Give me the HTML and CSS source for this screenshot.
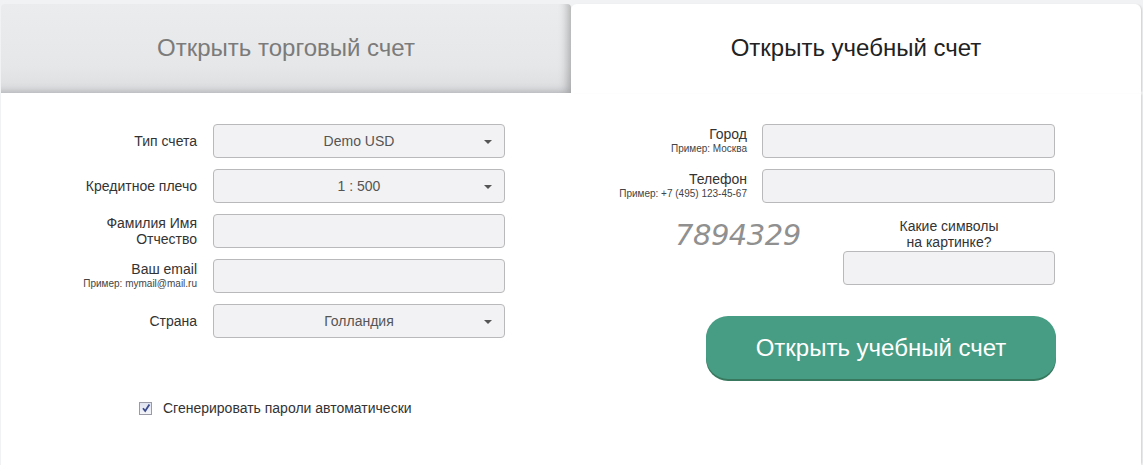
FILE: index.html
```html
<!DOCTYPE html>
<html lang="ru">
<head>
<meta charset="utf-8">
<link rel="stylesheet" href="styles.css">
</head>
<body>
<div class="wrap">
  <div class="tabs">
    <div class="tab tab-off">Открыть торговый счет</div>
    <div class="tab tab-on">Открыть учебный счет</div>
  </div>
  <div class="panel">
    <div class="col col-left">
      <div class="grid grid-left">
        <div class="lbl">Тип счета</div>
        <div class="field select"><span>Demo USD</span><i class="caret"></i></div>
        <div class="lbl">Кредитное плечо</div>
        <div class="field select"><span>1 : 500</span><i class="caret"></i></div>
        <div class="lbl">Фамилия Имя<br>Отчество</div>
        <div class="field"></div>
        <div class="lbl">Ваш email<small>Пример: mymail@mail.ru</small></div>
        <div class="field"></div>
        <div class="lbl">Страна</div>
        <div class="field select"><span>Голландия</span><i class="caret"></i></div>
      </div>
      <label class="check">
        <span class="box"><svg width="10" height="10" viewBox="0 0 10 10"><path d="M2 5.2 L4.2 8 L8.4 1.6" fill="none" stroke="#3b4a8a" stroke-width="1.8"/></svg></span>
        Сгенерировать пароли автоматически
      </label>
    </div>
    <div class="col col-right">
      <div class="grid grid-right">
        <div class="lbl">Город<small>Пример: Москва</small></div>
        <div class="field"></div>
        <div class="lbl">Телефон<small>Пример: +7 (495) 123-45-67</small></div>
        <div class="field"></div>
      </div>
      <div class="captcha">
        <div class="captcha-img">7894329</div>
        <div class="captcha-ask">
          <div class="ask">Какие символы<br>на картинке?</div>
          <div class="field"></div>
        </div>
      </div>
      <button class="submit">Открыть учебный счет</button>
    </div>
  </div>
</div>
</body>
</html>
```
FILE: styles.css
```css
* { box-sizing: border-box; }
html, body { margin: 0; padding: 0; }
body {
  background: #f1f2f3;
  font-family: "Liberation Sans", Arial, sans-serif;
  color: #333;
  width: 1143px;
  height: 465px;
  overflow: hidden;
}
.wrap {
  padding-top: 4px;
  margin-left: 1px;
  width: 1140px;
}
.tabs {
  display: flex;
  height: 89px;
}
.tab {
  display: flex;
  align-items: center;
  justify-content: center;
  font-size: 24px;
  padding-bottom: 1px;
}
.tab-off {
  width: 570px;
  background: linear-gradient(#ebeced, #e6e7e8 70%, #dcdde0);
  color: #7b7b7b;
  border-radius: 4px 4px 0 0;
  box-shadow: inset -9px -6px 10px -6px rgba(0,0,0,0.28);
}
.tab-on {
  flex: 1;
  background: #fff;
  color: #222;
  border-radius: 6px 6px 0 0;
  box-shadow: 2px 0 2px -1px #cfcfcf;
}
.panel {
  background: #fff;
  height: 372px;
  display: flex;
  box-shadow: 2px 0 2px -1px #cfcfcf;
}
.col-left { width: 570px; padding-top: 31px; }
.col-right { flex: 1; padding-top: 31px; }
.grid {
  display: grid;
  row-gap: 11px;
  align-items: center;
}
.grid-left { grid-template-columns: 196px 292px; column-gap: 16px; }
.grid-right { grid-template-columns: 176px 293px; column-gap: 15px; }
.lbl {
  text-align: right;
  font-size: 14px;
  line-height: 16px;
  color: #333;
}
.lbl small {
  display: block;
  font-size: 10px;
  line-height: 14px;
  color: #444;
}
.field {
  height: 34px;
  background: #f2f2f4;
  border: 1px solid #b9b9bb;
  border-radius: 4px;
}
.select {
  display: flex;
  align-items: center;
  justify-content: center;
  position: relative;
  font-size: 14px;
  color: #555;
}
.caret {
  position: absolute;
  right: 12px;
  top: 15px;
  border-left: 4px solid transparent;
  border-right: 4px solid transparent;
  border-top: 4px solid #555;
}
.check {
  display: flex;
  align-items: center;
  margin: 62px 0 0 138px;
  font-size: 14px;
  color: #333;
  gap: 11px;
}
.box {
  width: 13px;
  height: 13px;
  border: 1px solid #9a9aa6;
  background: linear-gradient(#dfe3ef, #f4f5fa);
  display: flex;
  align-items: center;
  justify-content: center;
}
.captcha {
  display: flex;
  margin-top: 15px;
}
.captcha-img {
  width: 128px;
  height: 34px;
  margin-left: 104px;
  font-family: "DejaVu Sans", sans-serif;
  font-style: italic;
  font-weight: 300;
  font-size: 29px;
  line-height: 34px;
  color: #909090;
  letter-spacing: -0.5px;
  white-space: nowrap;
}
.captcha-ask {
  width: 212px;
  margin-left: 40px;
}
.ask {
  text-align: center;
  font-size: 14px;
  line-height: 16px;
  color: #333;
  margin-bottom: 1px;
}
.submit {
  display: block;
  margin: 31px 0 0 135px;
  width: 350px;
  height: 63px;
  background: #479d83;
  border: none;
  border-radius: 22px;
  box-shadow: 0 2px 0 #37785f;
  color: #fff;
  font-family: "Liberation Sans", Arial, sans-serif;
  font-size: 24px;
  padding: 0;
}
```
